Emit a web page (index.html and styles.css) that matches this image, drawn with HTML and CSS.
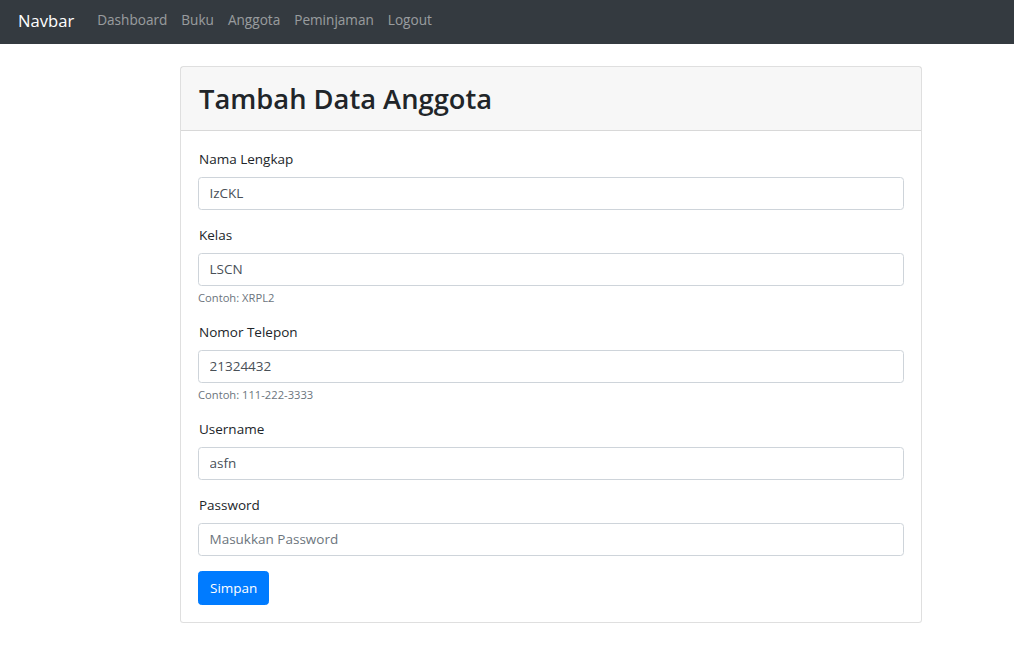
FILE: index.html
```html
<!DOCTYPE html>
<html lang="id">
<head>
<meta charset="utf-8">
<title>Tambah Data Anggota</title>
<link rel="stylesheet" href="styles.css">
</head>
<body>
<nav class="navbar">
  <a class="brand" href="#">Navbar</a>
  <ul class="nav">
    <li><a class="nav-link" href="#">Dashboard</a></li>
    <li><a class="nav-link" href="#">Buku</a></li>
    <li><a class="nav-link" href="#">Anggota</a></li>
    <li><a class="nav-link" href="#">Peminjaman</a></li>
    <li><a class="nav-link" href="#">Logout</a></li>
  </ul>
</nav>
<main class="page">
  <div class="card">
    <div class="card-header">
      <h1 class="title">Tambah Data Anggota</h1>
    </div>
    <form class="card-body">
      <div class="form-group">
        <label class="label" for="nama">Nama Lengkap</label>
        <input class="form-control" id="nama" type="text" value="IzCKL">
      </div>
      <div class="form-group">
        <label class="label" for="kelas">Kelas</label>
        <input class="form-control" id="kelas" type="text" value="LSCN">
        <small class="help">Contoh: XRPL2</small>
      </div>
      <div class="form-group">
        <label class="label" for="telp">Nomor Telepon</label>
        <input class="form-control" id="telp" type="text" value="21324432">
        <small class="help">Contoh: 111-222-3333</small>
      </div>
      <div class="form-group">
        <label class="label" for="user">Username</label>
        <input class="form-control" id="user" type="text" value="asfn">
      </div>
      <div class="form-group">
        <label class="label" for="pass">Password</label>
        <input class="form-control" id="pass" type="password" placeholder="Masukkan Password">
      </div>
      <button class="btn" type="button">Simpan</button>
    </form>
  </div>
</main>
</body>
</html>
```
FILE: styles.css
```css
* { box-sizing: border-box; }
html, body { margin: 0; padding: 0; }
body {
  font-family: "Open Sans", "Noto Sans", sans-serif;
  font-size: 13.5px;
  line-height: 1.5;
  color: #212529;
  background: #fff;
}
.navbar {
  display: flex;
  align-items: center;
  height: 44px;
  padding: 0 14px 3px 18px;
  background: #343a40;
}
.brand {
  color: #fff;
  text-decoration: none;
  font-size: 16.6px;
  line-height: 26px;
  margin-right: 16px;
}
.nav {
  display: flex;
  list-style: none;
  margin: 0;
  padding: 0;
}
.nav-link {
  display: block;
  padding: 0 7px;
  color: rgba(255,255,255,.5);
  text-decoration: none;
  font-size: 13.6px;
}
.page {
  padding: 22px 0 0 180px;
}
.card {
  width: 742px;
  border: 1px solid rgba(0,0,0,.125);
  border-radius: 3.5px;
  background: #fff;
}
.card-header {
  padding: 10.5px 17px;
  background: rgba(0,0,0,.03);
  border-bottom: 1px solid rgba(0,0,0,.125);
}
.title {
  margin: 0 0 0 1px;
  font-size: 27.3px;
  line-height: 42px;
  font-weight: 600;
}
.card-body {
  display: block;
  padding: 17.5px 17px;
}
.form-group {
  margin-bottom: 15px;
}
.label {
  display: inline-block;
  margin: 0 0 7px 1px;
  font-size: 13.5px;
  line-height: 21px;
}
.form-control {
  display: block;
  width: 100%;
  height: 33px;
  padding: 5px 10.5px;
  font-family: inherit;
  font-size: 13.5px;
  line-height: 21px;
  color: #495057;
  background: #fff;
  border: 1px solid #ced4da;
  border-radius: 3.5px;
  outline: none;
}
.form-control::placeholder { color: #6c757d; opacity: 1; }
.help {
  display: block;
  margin-top: 3.5px;
  font-size: 11.2px;
  line-height: 17.5px;
  color: #6c757d;
}
.btn {
  display: inline-block;
  height: 34px;
  padding: 0 11px;
  font-family: inherit;
  font-size: 13.5px;
  color: #fff;
  background: #007bff;
  border: 1px solid #007bff;
  border-radius: 3.5px;
}
```
